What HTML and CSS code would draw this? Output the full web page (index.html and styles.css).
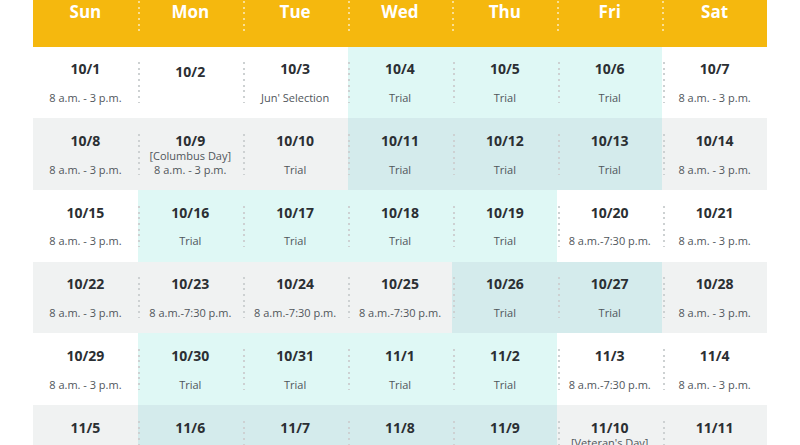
FILE: index.html
```html
<!DOCTYPE html>
<html lang="en">
<head>
<meta charset="utf-8">
<title>Calendar</title>
<link rel="stylesheet" href="styles.css">
</head>
<body>
<div class="calendar">
  <div class="head">Sun</div>
  <div class="head">Mon</div>
  <div class="head">Tue</div>
  <div class="head">Wed</div>
  <div class="head">Thu</div>
  <div class="head">Fri</div>
  <div class="head">Sat</div>

  <div class="cell"><div class="date">10/1</div><div class="note">8 a.m. - 3 p.m.</div></div>
  <div class="cell solo"><div class="date">10/2</div></div>
  <div class="cell"><div class="date">10/3</div><div class="note">Jun' Selection</div></div>
  <div class="cell trial"><div class="date">10/4</div><div class="note">Trial</div></div>
  <div class="cell trial"><div class="date">10/5</div><div class="note">Trial</div></div>
  <div class="cell trial"><div class="date">10/6</div><div class="note">Trial</div></div>
  <div class="cell"><div class="date">10/7</div><div class="note">8 a.m. - 3 p.m.</div></div>

  <div class="cell alt"><div class="date">10/8</div><div class="note">8 a.m. - 3 p.m.</div></div>
  <div class="cell alt"><div class="date">10/9</div><div class="note">[Columbus Day]</div><div class="note">8 a.m. - 3 p.m.</div></div>
  <div class="cell alt"><div class="date">10/10</div><div class="note">Trial</div></div>
  <div class="cell alt trial"><div class="date">10/11</div><div class="note">Trial</div></div>
  <div class="cell alt trial"><div class="date">10/12</div><div class="note">Trial</div></div>
  <div class="cell alt trial"><div class="date">10/13</div><div class="note">Trial</div></div>
  <div class="cell alt"><div class="date">10/14</div><div class="note">8 a.m. - 3 p.m.</div></div>

  <div class="cell"><div class="date">10/15</div><div class="note">8 a.m. - 3 p.m.</div></div>
  <div class="cell trial"><div class="date">10/16</div><div class="note">Trial</div></div>
  <div class="cell trial"><div class="date">10/17</div><div class="note">Trial</div></div>
  <div class="cell trial"><div class="date">10/18</div><div class="note">Trial</div></div>
  <div class="cell trial"><div class="date">10/19</div><div class="note">Trial</div></div>
  <div class="cell"><div class="date">10/20</div><div class="note">8 a.m.-7:30 p.m.</div></div>
  <div class="cell"><div class="date">10/21</div><div class="note">8 a.m. - 3 p.m.</div></div>

  <div class="cell alt"><div class="date">10/22</div><div class="note">8 a.m. - 3 p.m.</div></div>
  <div class="cell alt"><div class="date">10/23</div><div class="note">8 a.m.-7:30 p.m.</div></div>
  <div class="cell alt"><div class="date">10/24</div><div class="note">8 a.m.-7:30 p.m.</div></div>
  <div class="cell alt"><div class="date">10/25</div><div class="note">8 a.m.-7:30 p.m.</div></div>
  <div class="cell alt trial"><div class="date">10/26</div><div class="note">Trial</div></div>
  <div class="cell alt trial"><div class="date">10/27</div><div class="note">Trial</div></div>
  <div class="cell alt"><div class="date">10/28</div><div class="note">8 a.m. - 3 p.m.</div></div>

  <div class="cell"><div class="date">10/29</div><div class="note">8 a.m. - 3 p.m.</div></div>
  <div class="cell trial"><div class="date">10/30</div><div class="note">Trial</div></div>
  <div class="cell trial"><div class="date">10/31</div><div class="note">Trial</div></div>
  <div class="cell trial"><div class="date">11/1</div><div class="note">Trial</div></div>
  <div class="cell trial"><div class="date">11/2</div><div class="note">Trial</div></div>
  <div class="cell"><div class="date">11/3</div><div class="note">8 a.m.-7:30 p.m.</div></div>
  <div class="cell"><div class="date">11/4</div><div class="note">8 a.m. - 3 p.m.</div></div>

  <div class="cell alt"><div class="date">11/5</div><div class="note">8 a.m. - 3 p.m.</div></div>
  <div class="cell alt trial"><div class="date">11/6</div><div class="note">Trial</div></div>
  <div class="cell alt trial"><div class="date">11/7</div><div class="note">Trial</div></div>
  <div class="cell alt trial"><div class="date">11/8</div><div class="note">Trial</div></div>
  <div class="cell alt trial"><div class="date">11/9</div><div class="note">Trial</div></div>
  <div class="cell alt"><div class="date">11/10</div><div class="note">[Veteran's Day]</div><div class="note">8 a.m. - 3 p.m.</div></div>
  <div class="cell alt"><div class="date">11/11</div><div class="note">8 a.m. - 3 p.m.</div></div>
</div>
</body>
</html>
```

FILE: styles.css
```css
html, body {
  margin: 0;
  padding: 0;
  background: #ffffff;
  overflow: hidden;
}

body {
  font-family: "Open Sans", "Noto Sans", sans-serif;
  color: #2b2f33;
}

.calendar {
  width: 734px;
  margin: 0 0 0 33px;
  display: grid;
  grid-template-columns: repeat(7, 1fr);
  grid-template-rows: 46.7px repeat(6, 71.7px);
}

.head {
  position: relative;
  background: #f5b80e;
  color: #ffffff;
  font-weight: 700;
  font-size: 17px;
  line-height: 23px;
  text-align: center;
}

.head + .head::before {
  content: "";
  position: absolute;
  left: 0;
  top: 1px;
  width: 2px;
  height: 30px;
  background: repeating-linear-gradient(to bottom, rgba(255, 255, 255, 0.55) 0 2px, transparent 2px 5.67px);
}

.cell {
  position: relative;
  background: #ffffff;
  display: flex;
  flex-direction: column;
  align-items: center;
  justify-content: space-between;
  padding: 14.5px 0 13.7px;
  box-sizing: border-box;
  text-align: center;
}

.cell.alt {
  background: #f0f2f2;
}

.cell.trial {
  background: #dff8f5;
}

.cell.alt.trial {
  background: #d4ebec;
}

.cell:not(:nth-child(7n+1))::before {
  content: "";
  position: absolute;
  left: 0.5px;
  top: 15.6px;
  width: 2px;
  height: 41px;
  background: repeating-linear-gradient(to bottom, #cdd1d2 0 2px, transparent 2px 5.67px);
}

.date {
  font-weight: 700;
  font-size: 14px;
  line-height: 16px;
  color: #2b2f33;
}

.note {
  font-size: 11px;
  line-height: 13.6px;
  color: #50565b;
}

.solo .date {
  margin-top: 2.5px;
}
```
